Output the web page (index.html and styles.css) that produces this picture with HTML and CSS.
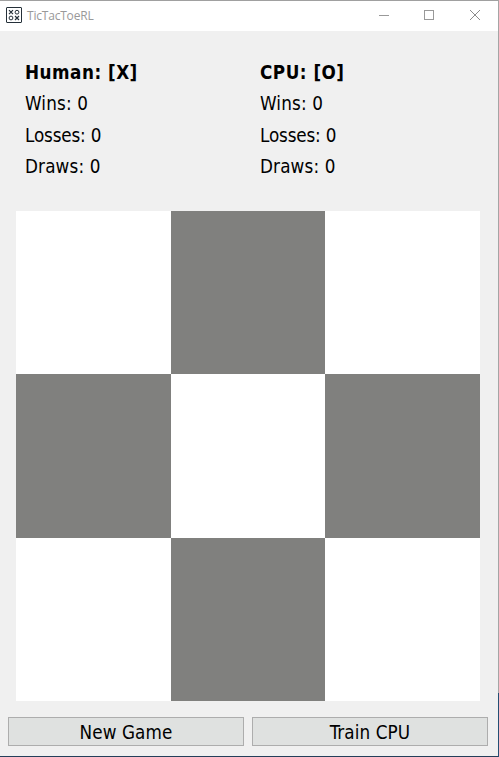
FILE: index.html
```html
<!DOCTYPE html>
<html lang="en">
<head>
<meta charset="utf-8">
<title>TicTacToeRL</title>
<link rel="stylesheet" href="styles.css">
</head>
<body>
<div class="window">
  <header class="titlebar">
    <svg class="logo" width="16" height="16" viewBox="0 0 16 16" fill="none" stroke="#253039">
      <rect x=".5" y=".5" width="15" height="15" rx=".5"/>
      <path d="M3 3.2l4 4M7 3.2l-4 4M9 9l4 4M13 9l-4 4" stroke-width="1.2"/>
      <circle cx="11" cy="5.2" r="1.9"/>
      <circle cx="5" cy="11" r="1.9"/>
    </svg>
    <span class="title">TicTacToeRL</span>
    <div class="controls">
      <svg width="45" height="30" viewBox="0 0 45 30"><path d="M18 14.5h10" stroke="#999"/></svg>
      <svg width="45" height="30" viewBox="0 0 45 30"><rect x="18.5" y="9.5" width="9" height="9" fill="none" stroke="#999"/></svg>
      <svg width="45" height="30" viewBox="0 0 45 30"><path d="M19 9l10 10M29 9l-10 10" stroke="#8c8c8c"/></svg>
    </div>
  </header>
  <section class="scores">
    <div class="player">
      <div class="name">Human: [X]</div>
      <div class="stat">Wins: 0</div>
      <div class="stat losses">Losses: 0</div>
      <div class="stat">Draws: 0</div>
    </div>
    <div class="player">
      <div class="name">CPU: [O]</div>
      <div class="stat">Wins: 0</div>
      <div class="stat losses">Losses: 0</div>
      <div class="stat">Draws: 0</div>
    </div>
  </section>
  <main class="board">
    <div></div><div class="dark"></div><div></div>
    <div class="dark"></div><div></div><div class="dark"></div>
    <div></div><div class="dark"></div><div></div>
  </main>
  <footer class="actions">
    <button>New Game</button>
    <button>Train CPU</button>
  </footer>
</div>
<div class="edge"></div>
</body>
</html>
```
FILE: styles.css
```css
* { box-sizing: border-box; }
body {
  margin: 0;
  width: 499px;
  height: 757px;
  display: flex;
  overflow: hidden;
  color: #000;
  font-family: Tahoma, "DejaVu Sans Condensed", "DejaVu Sans", sans-serif;
  font-stretch: condensed;
}
.window {
  width: 498px;
  height: 757px;
  background: #f0f0f0;
  border-top: 1px solid #a0a0a0;
  border-bottom: 1px solid #243f5a;
}
.edge {
  width: 1px;
  background: linear-gradient(#a5a5a5 693px, #234f74 693px);
}
.titlebar {
  height: 30px;
  background: #fff;
  display: flex;
  align-items: center;
  padding-left: 6px;
}
.logo { margin-top: -2px; }
.title {
  margin-left: 5px;
  font: 12px/16px "Open Sans", sans-serif;
  letter-spacing: -0.2px;
  color: #999;
}
.controls { display: flex; margin-left: auto; margin-right: 2px; }
.scores {
  height: 180px;
  padding: 26px 0 0 25px;
  display: grid;
  grid-template-columns: 235px 1fr;
  font-size: 18.7px;
  line-height: 31.4px;
}
.name { font-weight: bold; letter-spacing: 0.5px; }
.stat { letter-spacing: 0.15px; }
.losses { letter-spacing: -0.15px; }
.board {
  width: 464px;
  height: 490px;
  margin-left: 16px;
  display: grid;
  grid-template-columns: 155px 154px 155px;
  grid-template-rows: 163px 164px 163px;
  background: #fff;
}
.dark { background: #80807e; }
.actions {
  display: flex;
  gap: 8px;
  padding: 16px 0 0 8px;
}
.actions button {
  width: 236px;
  height: 29px;
  padding: 2px 0 0;
  border: 1px solid #adadad;
  background: #dfe1e0;
  color: #000;
  font: inherit;
  font-size: 18.7px;
  letter-spacing: 0.1px;
}
```
